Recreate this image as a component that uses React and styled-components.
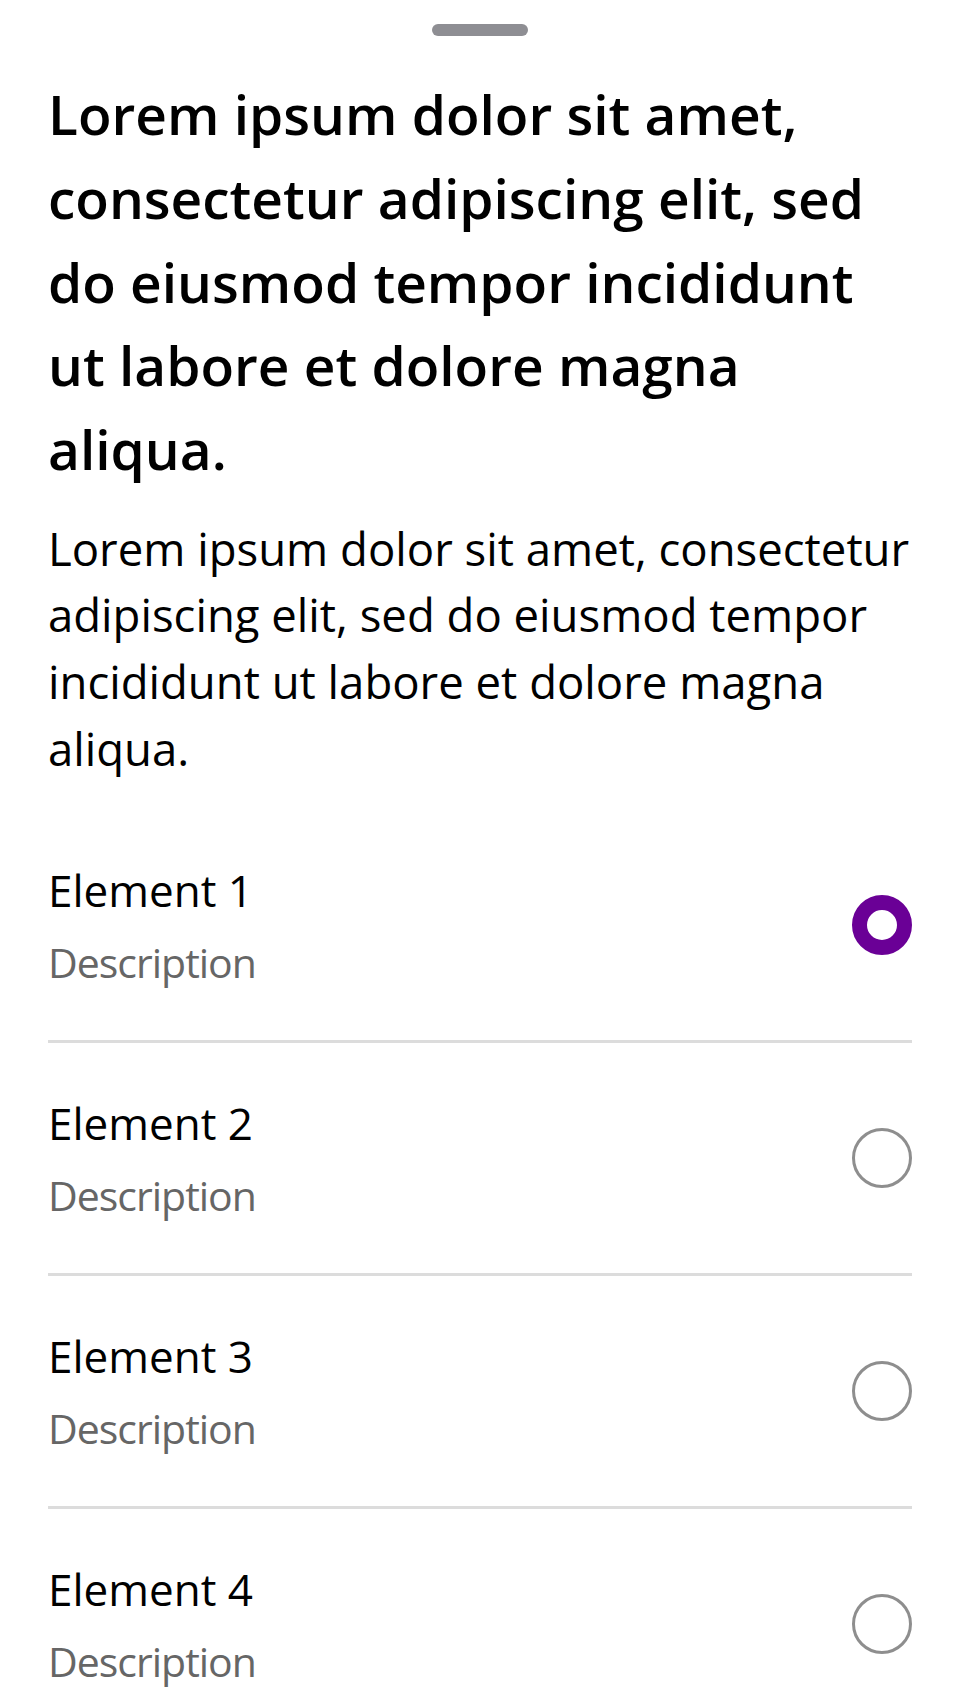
import styled, { createGlobalStyle } from "styled-components";

const GlobalStyle = createGlobalStyle`
  html, body {
    margin: 0;
    padding: 0;
    background: #ffffff;
  }
  body {
    font-family: "Open Sans", "Noto Sans", sans-serif;
    color: #000000;
  }
`;

const Sheet = styled.div`
  padding: 24px 48px 0;
  display: flex;
  flex-direction: column;
`;

const Handle = styled.div`
  width: 96px;
  height: 12px;
  border-radius: 6px;
  background: #8e8e93;
  margin: 0 auto;
`;

const Title = styled.h1`
  margin: 36px 0 0;
  font-size: 55px;
  line-height: 83.75px;
  font-weight: 600;
`;

const Text = styled.p`
  margin: 24px 0 0;
  font-size: 45.5px;
  line-height: 66.7px;
  font-weight: 400;
`;

const List = styled.div`
  margin-top: 28.5px;
  display: flex;
  flex-direction: column;
`;

const Row = styled.label`
  display: flex;
  align-items: center;
  justify-content: space-between;
  padding: 52px 0;
  border-bottom: 3px solid #dcdcdc;
`;

const Labels = styled.div`
  display: flex;
  flex-direction: column;
`;

const Name = styled.span`
  font-size: 44px;
  line-height: 56px;
`;

const Desc = styled.span`
  font-size: 41px;
  line-height: 52px;
  letter-spacing: -1px;
  color: #666666;
  margin-top: 18px;
`;

const Radio = styled.span`
  width: 60px;
  height: 60px;
  box-sizing: border-box;
  border-radius: 50%;
  flex-shrink: 0;
  border: ${(p) => (p.$checked ? "15px solid #6a0096" : "3px solid #8e8e8e")};
`;

const items = [
  { id: 1, name: "Element 1", desc: "Description" },
  { id: 2, name: "Element 2", desc: "Description" },
  { id: 3, name: "Element 3", desc: "Description" },
  { id: 4, name: "Element 4", desc: "Description" },
];

export default function App() {
  const selected = 1;
  return (
    <>
      <GlobalStyle />
      <Sheet>
        <Handle />
        <Title>
          Lorem ipsum dolor sit amet, consectetur adipiscing elit, sed do
          eiusmod tempor incididunt ut labore et dolore magna aliqua.
        </Title>
        <Text>
          Lorem ipsum dolor sit amet, consectetur adipiscing elit, sed do
          eiusmod tempor incididunt ut labore et dolore magna aliqua.
        </Text>
        <List>
          {items.map((it) => (
            <Row key={it.id}>
              <Labels>
                <Name>{it.name}</Name>
                <Desc>{it.desc}</Desc>
              </Labels>
              <Radio $checked={it.id === selected} />
            </Row>
          ))}
        </List>
      </Sheet>
    </>
  );
}
